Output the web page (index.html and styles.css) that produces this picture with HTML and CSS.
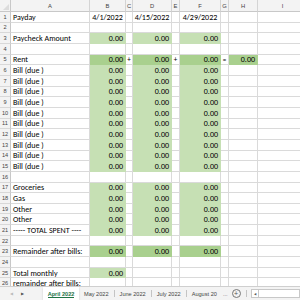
FILE: index.html
```html
<!DOCTYPE html>
<html>
<head>
<meta charset="utf-8">
<link rel="stylesheet" href="styles.css">
</head>
<body>
<div class="app">
  <div class="sheet">
    <div class="corner"><span class="tri"></span></div><div class="ch">A</div><div class="ch">B</div><div class="ch">C</div><div class="ch">D</div><div class="ch">E</div><div class="ch">F</div><div class="ch">G</div><div class="ch">H</div><div class="ch">I</div>

    <div class="rh">1</div><div class="c">Payday</div><div class="c ctr">4/1/2022</div><div class="c"></div><div class="c ctr">4/15/2022</div><div class="c"></div><div class="c ctr">4/29/2022</div><div class="c"></div><div class="c"></div><div class="c"></div>
    <div class="rh">2</div><div class="c"></div><div class="c"></div><div class="c"></div><div class="c"></div><div class="c"></div><div class="c"></div><div class="c"></div><div class="c"></div><div class="c"></div>
    <div class="rh">3</div><div class="c">Paycheck Amount</div><div class="c g n">0.00</div><div class="c"></div><div class="c g n">0.00</div><div class="c"></div><div class="c g n">0.00</div><div class="c"></div><div class="c"></div><div class="c"></div>
    <div class="rh">4</div><div class="c"></div><div class="c"></div><div class="c"></div><div class="c"></div><div class="c"></div><div class="c"></div><div class="c"></div><div class="c"></div><div class="c"></div>
    <div class="rh">5</div><div class="c">Rent</div><div class="c d n">0.00</div><div class="c op">+</div><div class="c d n">0.00</div><div class="c op">+</div><div class="c d n">0.00</div><div class="c op">=</div><div class="c d n">0.00</div><div class="c"></div>
    <div class="rh">6</div><div class="c">Bill (due )</div><div class="c g n">0.00</div><div class="c"></div><div class="c g n">0.00</div><div class="c"></div><div class="c g n">0.00</div><div class="c"></div><div class="c"></div><div class="c"></div>
    <div class="rh">7</div><div class="c">Bill (due )</div><div class="c g n">0.00</div><div class="c"></div><div class="c g n">0.00</div><div class="c"></div><div class="c g n">0.00</div><div class="c"></div><div class="c"></div><div class="c"></div>
    <div class="rh">8</div><div class="c">Bill (due )</div><div class="c g n">0.00</div><div class="c"></div><div class="c g n">0.00</div><div class="c"></div><div class="c g n">0.00</div><div class="c"></div><div class="c"></div><div class="c"></div>
    <div class="rh">9</div><div class="c">Bill (due )</div><div class="c g n">0.00</div><div class="c"></div><div class="c g n">0.00</div><div class="c"></div><div class="c g n">0.00</div><div class="c"></div><div class="c"></div><div class="c"></div>
    <div class="rh">10</div><div class="c">Bill (due )</div><div class="c g n">0.00</div><div class="c"></div><div class="c g n">0.00</div><div class="c"></div><div class="c g n">0.00</div><div class="c"></div><div class="c"></div><div class="c"></div>
    <div class="rh">11</div><div class="c">Bill (due )</div><div class="c g n">0.00</div><div class="c"></div><div class="c g n">0.00</div><div class="c"></div><div class="c g n">0.00</div><div class="c"></div><div class="c"></div><div class="c"></div>
    <div class="rh">12</div><div class="c">Bill (due )</div><div class="c g n">0.00</div><div class="c"></div><div class="c g n">0.00</div><div class="c"></div><div class="c g n">0.00</div><div class="c"></div><div class="c"></div><div class="c"></div>
    <div class="rh">13</div><div class="c">Bill (due )</div><div class="c g n">0.00</div><div class="c"></div><div class="c g n">0.00</div><div class="c"></div><div class="c g n">0.00</div><div class="c"></div><div class="c"></div><div class="c"></div>
    <div class="rh">14</div><div class="c">Bill (due )</div><div class="c g n">0.00</div><div class="c"></div><div class="c g n">0.00</div><div class="c"></div><div class="c g n">0.00</div><div class="c"></div><div class="c"></div><div class="c"></div>
    <div class="rh">15</div><div class="c">Bill (due )</div><div class="c g n">0.00</div><div class="c"></div><div class="c g n">0.00</div><div class="c"></div><div class="c g n">0.00</div><div class="c"></div><div class="c"></div><div class="c"></div>
    <div class="rh">16</div><div class="c"></div><div class="c"></div><div class="c"></div><div class="c"></div><div class="c"></div><div class="c"></div><div class="c"></div><div class="c"></div><div class="c"></div>
    <div class="rh">17</div><div class="c">Groceries</div><div class="c g n">0.00</div><div class="c"></div><div class="c g n">0.00</div><div class="c"></div><div class="c g n">0.00</div><div class="c"></div><div class="c"></div><div class="c"></div>
    <div class="rh">18</div><div class="c">Gas</div><div class="c g n">0.00</div><div class="c"></div><div class="c g n">0.00</div><div class="c"></div><div class="c g n">0.00</div><div class="c"></div><div class="c"></div><div class="c"></div>
    <div class="rh">19</div><div class="c">Other</div><div class="c g n">0.00</div><div class="c"></div><div class="c g n">0.00</div><div class="c"></div><div class="c g n">0.00</div><div class="c"></div><div class="c"></div><div class="c"></div>
    <div class="rh">20</div><div class="c">Other</div><div class="c g n">0.00</div><div class="c"></div><div class="c g n">0.00</div><div class="c"></div><div class="c g n">0.00</div><div class="c"></div><div class="c"></div><div class="c"></div>
    <div class="rh">21</div><div class="c">----- TOTAL SPENT ----</div><div class="c g n">0.00</div><div class="c"></div><div class="c g n">0.00</div><div class="c"></div><div class="c g n">0.00</div><div class="c"></div><div class="c"></div><div class="c"></div>
    <div class="rh">22</div><div class="c"></div><div class="c"></div><div class="c"></div><div class="c"></div><div class="c"></div><div class="c"></div><div class="c"></div><div class="c"></div><div class="c"></div>
    <div class="rh">23</div><div class="c">Remainder after bills:</div><div class="c d n">0.00</div><div class="c"></div><div class="c d n">0.00</div><div class="c"></div><div class="c d n">0.00</div><div class="c"></div><div class="c"></div><div class="c"></div>
    <div class="rh">24</div><div class="c"></div><div class="c"></div><div class="c"></div><div class="c"></div><div class="c"></div><div class="c"></div><div class="c"></div><div class="c"></div><div class="c"></div>
    <div class="rh">25</div><div class="c">Total monthly</div><div class="c g n">0.00</div><div class="c"></div><div class="c"></div><div class="c"></div><div class="c"></div><div class="c"></div><div class="c"></div><div class="c"></div>
    <div class="rh">26</div><div class="c">remainder after bills:</div><div class="c"></div><div class="c"></div><div class="c"></div><div class="c"></div><div class="c"></div><div class="c"></div><div class="c"></div><div class="c"></div>
  </div>
  <div class="tabbar">
    <div class="navs"><span class="nav">&#9664;</span><span class="nav dark">&#9654;</span></div>
    <div class="tab active">April 2022</div>
    <div class="tab">May 2022</div><span class="sep"></span>
    <div class="tab">June 2022</div><span class="sep"></span>
    <div class="tab">July 2022</div><span class="sep"></span>
    <div class="tab">August 20</div>
    <div class="more">...</div>
    <div class="add">+</div>
    <span class="sep"></span>
    <div class="scroll"><span class="sbtn">&#9664;</span><span class="strack"></span></div>
  </div>
</div>
</body>
</html>
```

FILE: styles.css
```css
html, body {
  margin: 0;
  padding: 0;
  background: #ffffff;
}
.app {
  width: 300px;
  height: 300px;
  overflow: hidden;
  display: flex;
  flex-direction: column;
  font-family: Carlito, "Liberation Sans", Arial, sans-serif;
}
.sheet {
  height: 286px;
  flex: none;
  overflow: hidden;
  display: grid;
  grid-template-columns: 11px 79px 36px 7px 39px 8px 41px 8px 29px 50px;
  grid-template-rows: 12px;
  grid-auto-rows: 10.67px;
}
.corner {
  background: #f3f3f3;
  border-right: 1px solid #c8c8c8;
  border-bottom: 1px solid #c8c8c8;
  box-sizing: border-box;
  position: relative;
}
.tri {
  position: absolute;
  right: 1px;
  bottom: 1px;
  width: 0;
  height: 0;
  border-left: 6px solid transparent;
  border-bottom: 6px solid #dcdcdc;
}
.ch {
  background: #f3f3f3;
  border-right: 1px solid #d4d4d4;
  border-bottom: 1px solid #c8c8c8;
  box-sizing: border-box;
  font-family: "Liberation Sans", Arial, sans-serif;
  font-size: 5.8px;
  color: #444;
  display: flex;
  align-items: center;
  justify-content: center;
}
.rh {
  background: #f3f3f3;
  border-right: 1px solid #c8c8c8;
  border-bottom: 1px solid #d8d8d8;
  box-sizing: border-box;
  font-family: "Liberation Sans", Arial, sans-serif;
  font-size: 5.6px;
  color: #444;
  display: flex;
  align-items: center;
  justify-content: center;
}
.c {
  box-sizing: border-box;
  border-right: 1px solid #dadada;
  border-bottom: 1px solid #dadada;
  font-size: 8px;
  color: #000;
  padding: 0 2px;
  white-space: nowrap;
  overflow: visible;
  display: flex;
  align-items: center;
  line-height: 1;
}
.g {
  background: #c6e0b4;
  border-color: #c6e0b4;
}
.d {
  background: #a9d08e;
  border-color: #a9d08e;
}
.n {
  justify-content: flex-end;
  padding-right: 2px;
}
.ctr {
  justify-content: center;
  padding: 0;
}
.op {
  justify-content: center;
  padding: 0;
  font-size: 7px;
}
.tabbar {
  flex: 1;
  display: flex;
  align-items: stretch;
  background: #f3f3f3;
  border-top: 1px solid #cfcfcf;
  font-family: "Liberation Sans", Arial, sans-serif;
  font-size: 5.6px;
  color: #444;
}
.navs {
  width: 43px;
  flex: none;
  display: flex;
  align-items: center;
  gap: 8px;
  padding-left: 10px;
  box-sizing: border-box;
}
.nav {
  font-size: 4px;
  color: #bbb;
}
.nav.dark {
  color: #555;
}
.tab {
  display: flex;
  align-items: center;
  padding: 0 5px;
}
.tab.active {
  background: #ffffff;
  color: #217346;
  font-weight: bold;
  width: 36px;
  box-sizing: border-box;
  justify-content: center;
  padding: 0;
  position: relative;
  box-shadow: 0 1px 2px rgba(0,0,0,0.15);
}
.tab.active::after {
  content: "";
  position: absolute;
  left: 5px;
  right: 5px;
  bottom: 2px;
  height: 1px;
  background: #217346;
}
.sep {
  width: 1px;
  background: #c4c4c4;
  margin: 3px 0;
}
.more {
  display: flex;
  align-items: center;
  padding: 0 2px 0 1px;
  color: #666;
}
.add {
  width: 7px;
  height: 7px;
  border: 1px solid #777;
  border-radius: 50%;
  align-self: center;
  display: flex;
  align-items: center;
  justify-content: center;
  font-size: 7px;
  line-height: 1;
  color: #555;
  margin: 0 5px 0 2px;
}
.scroll {
  flex: 1;
  display: flex;
  align-items: center;
  padding-left: 4px;
}
.sbtn {
  width: 6px;
  height: 7px;
  border: 1px solid #c8c8c8;
  background: #fff;
  font-size: 3px;
  color: #555;
  display: flex;
  align-items: center;
  justify-content: center;
}
.strack {
  flex: 1;
  height: 7px;
  border: 1px solid #c8c8c8;
  border-left: none;
  background: #fff;
}
```
